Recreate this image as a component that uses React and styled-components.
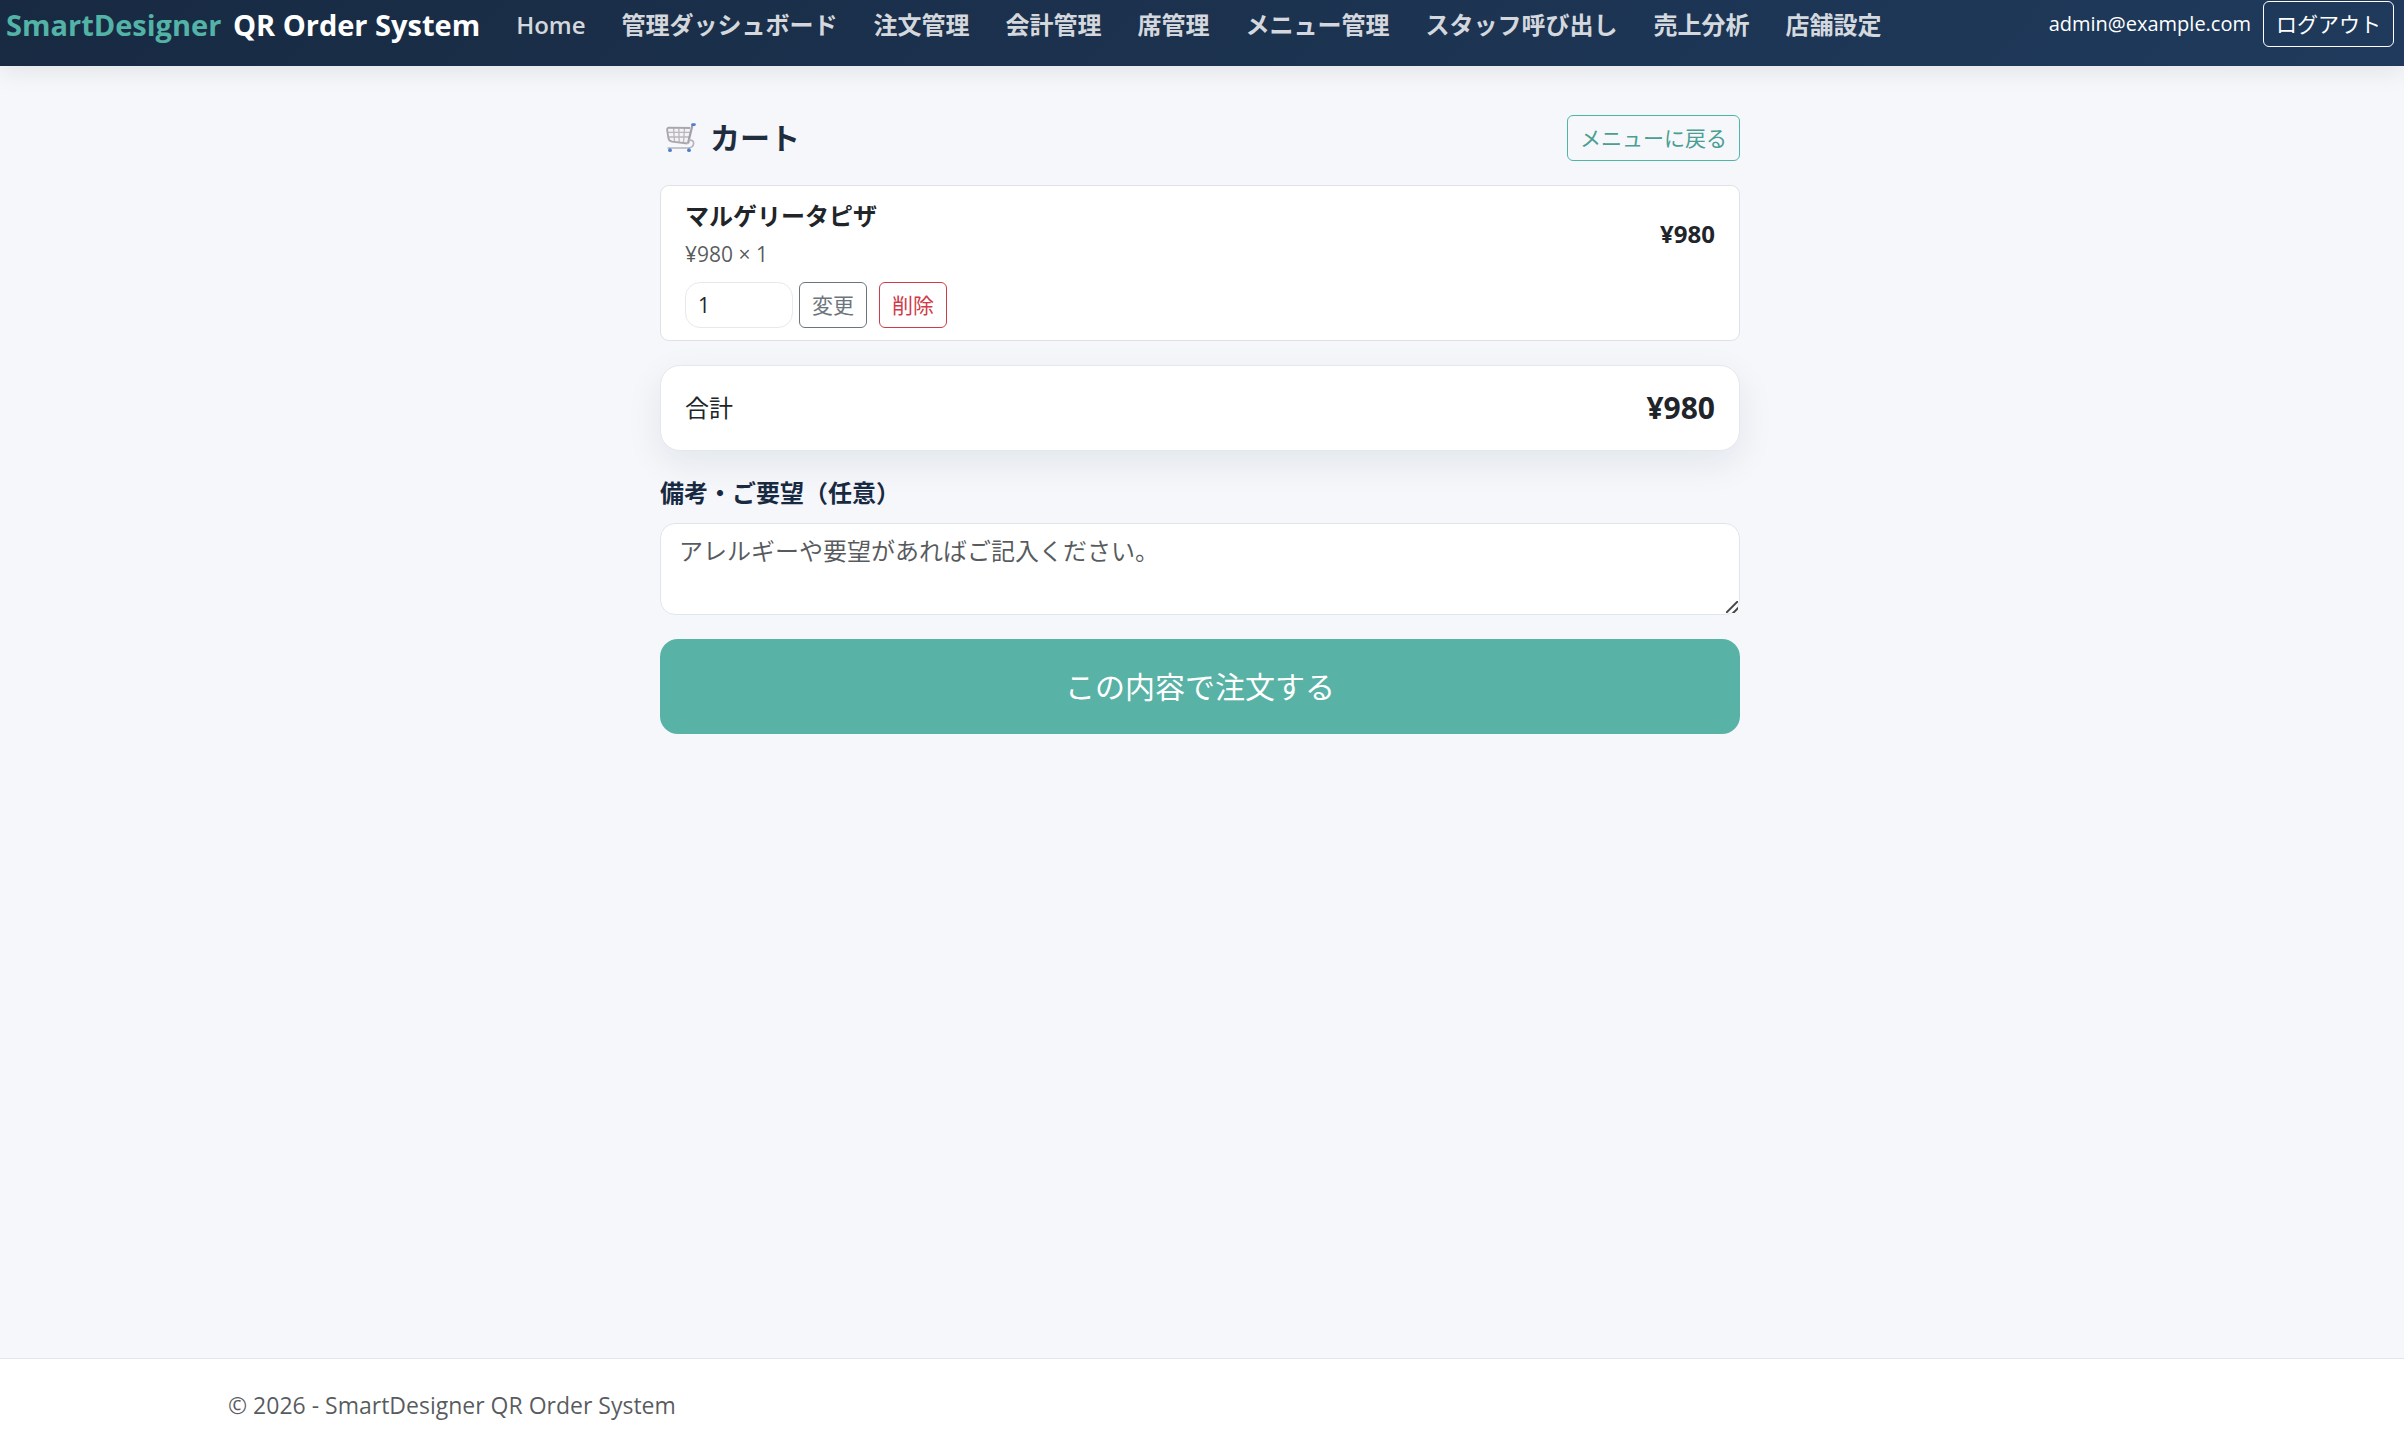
import React, { useState } from 'react'
import styled, { createGlobalStyle } from 'styled-components';

const navItems = [
    'Home',
    '管理ダッシュボード',
    '注文管理',
    '会計管理',
    '席管理',
    'メニュー管理',
    'スタッフ呼び出し',
    '売上分析',
    '店舗設定',
]

const yen = (value) => "¥" + value.toLocaleString()

const App = () => {
    const [item, setItem] = useState({ name: 'マルゲリータピザ', price: 980, quantity: 1 })
    const [draft, setDraft] = useState(1)
    const [note, setNote] = useState('')

    const total = item ? item.price * item.quantity : 0

    const updateHandler = (event) => {
        event.preventDefault()
        setItem({ ...item, quantity: Number(draft) })
    }

    return (
        <Page>
            <GlobalStyle />
            <Navbar>
                <Brand href="#"><BrandAccent>SmartDesigner</BrandAccent> QR Order System</Brand>
                <NavLinks>
                    {navItems.map((label) => (
                        <NavLink key={label} href="#">{label}</NavLink>
                    ))}
                </NavLinks>
                <Account>
                    <span>admin@example.com</span>
                    <OutlineButton type="button" $color="#ffffff">ログアウト</OutlineButton>
                </Account>
            </Navbar>

            <Main>
                <Cart>
                    <TitleRow>
                        <Title>
                            <CartIcon />
                            カート
                        </Title>
                        <OutlineLink href="#" $color="#4db6a6" $text="#4a9e92">メニューに戻る</OutlineLink>
                    </TitleRow>

                    {item && (
                        <ItemCard>
                            <ItemHead>
                                <div>
                                    <ItemName>{item.name}</ItemName>
                                    <ItemDetail>{yen(item.price)} × {item.quantity}</ItemDetail>
                                </div>
                                <ItemPrice>{yen(total)}</ItemPrice>
                            </ItemHead>
                            <ItemForm onSubmit={updateHandler}>
                                <QuantityInput
                                    type="number"
                                    min="1"
                                    aria-label="数量"
                                    value={draft}
                                    onChange={(event) => setDraft(event.target.value)}
                                />
                                <OutlineButton type="submit" $color="#6c757d">変更</OutlineButton>
                                <DeleteButton type="button" $color="#d03b48" onClick={() => setItem(null)}>削除</DeleteButton>
                            </ItemForm>
                        </ItemCard>
                    )}

                    <TotalCard>
                        <span>合計</span>
                        <TotalPrice>{yen(total)}</TotalPrice>
                    </TotalCard>

                    <NoteLabel htmlFor="note">備考・ご要望（任意）</NoteLabel>
                    <NoteInput
                        id="note"
                        rows={2}
                        placeholder="アレルギーや要望があればご記入ください。"
                        value={note}
                        onChange={(event) => setNote(event.target.value)}
                    />
                    <SubmitButton type="button">この内容で注文する</SubmitButton>
                </Cart>
            </Main>

            <Footer>
                <FooterInner>© 2026 - SmartDesigner QR Order System</FooterInner>
            </Footer>
        </Page>
    )
}

export default App

const CartIcon = () => (
    <CartSvg viewBox="0 0 30 30" aria-hidden="true">
        <path d="M2 4.5 L25 3.5 L21.5 20 L6 18.5 Q3 18 2.6 15 L1 7 Q0.7 4.8 2 4.5 Z" fill="#f3f2f5" />
        <path d="M1.5 9.3 H24 M2 14 H23 M7.5 4.5 L8.5 18.5 M12.8 4.5 L13.2 19 M18.5 4.5 L17.5 19.5" stroke="#b9b6bd" strokeWidth="1.3" fill="none" />
        <path d="M24 5 L3 4.6 Q1 4.8 1.1 7 L2.4 15 Q3 18.2 6 18.6 L21.5 20.5" stroke="#a9a6ad" strokeWidth="1.8" fill="none" />
        <path d="M26.5 1.8 L22 20.5" stroke="#a29fa7" strokeWidth="2.2" fill="none" />
        <path d="M22.5 17.2 Q28 16.5 27.6 20.5 Q27.2 24.8 22 25 H1.5" stroke="#b7b2bd" strokeWidth="1.7" fill="none" />
        <path d="M26.5 1.6 H28.5" stroke="#4f7fca" strokeWidth="2.6" strokeLinecap="round" />
        <circle cx="4" cy="27.2" r="1.9" fill="#4f7fca" />
        <circle cx="23" cy="27.2" r="1.9" fill="#4f7fca" />
    </CartSvg>
)

const GlobalStyle = createGlobalStyle`
    * {
        box-sizing: border-box;
    }

    body {
        margin: 0;
        background-color: #f5f7fb;
        color: #212529;
        font-family: "Open Sans", "Noto Sans CJK JP", sans-serif;
        font-size: 24px;
        line-height: 36px;
    }

    button, input, textarea {
        font: inherit;
    }
`;

const Page = styled.div`
    display: flex;
    flex-direction: column;
    min-height: 100vh;
`;

const Navbar = styled.nav`
    display: flex;
    align-items: flex-start;
    padding: 1px 10px 17px 6px;
    background: linear-gradient(135deg, #182a42, #1f3a5c);
    box-shadow: 0 6px 24px rgba(0, 0, 0, 0.08);
`;

const Brand = styled.a`
    margin-right: 36px;
    color: white;
    font-size: 29px;
    font-weight: 700;
    line-height: 48px;
    text-decoration: none;
    white-space: nowrap;
`;

const BrandAccent = styled.span`
    margin-right: 4px;
    color: #53b3a6;
`;

const NavLinks = styled.div`
    display: flex;
    gap: 36px;
    flex: 1;
`;

const NavLink = styled.a`
    color: rgba(255, 255, 255, 0.82);
    font-weight: 600;
    line-height: 48px;
    text-decoration: none;
    white-space: nowrap;

    &:hover {
        color: white;
    }
`;

const Account = styled.div`
    display: flex;
    align-items: center;
    gap: 12px;
    color: white;
    font-size: 20px;
`;

const OutlineButton = styled.button`
    padding: 6px 12px;
    border: 1px solid ${({ $color }) => $color};
    border-radius: 6px;
    background-color: transparent;
    color: ${({ $color, $text }) => $text || $color};
    font-size: 21px;
    line-height: 32px;
    text-decoration: none;
    white-space: nowrap;
    cursor: pointer;
`;

const OutlineLink = styled(OutlineButton).attrs({ as: 'a' })``;

const DeleteButton = styled(OutlineButton)`
    margin-left: 6px;
`;

const Main = styled.main`
    flex: 1;
    padding: 49px 4px 48px 0;
`;

const Cart = styled.div`
    display: flex;
    flex-direction: column;
    max-width: 1080px;
    margin: 0 auto;
`;

const TitleRow = styled.div`
    display: flex;
    justify-content: space-between;
    align-items: center;
    margin-bottom: 24px;
`;

const Title = styled.h1`
    display: flex;
    align-items: center;
    gap: 14px;
    margin: 0;
    color: #1f2d3d;
    font-size: 30px;
    font-weight: 700;
`;

const CartSvg = styled.svg`
    width: 30px;
    height: 30px;
    margin-left: 6px;
`;

const ItemCard = styled.section`
    display: flex;
    flex-direction: column;
    gap: 12px;
    margin-bottom: 24px;
    padding: 12px 24px;
    border: 1px solid #dee2e6;
    border-radius: 9px;
    background-color: white;
`;

const ItemHead = styled.div`
    display: flex;
    justify-content: space-between;
    align-items: center;
`;

const ItemName = styled.div`
    margin-bottom: 4px;
    font-weight: 700;
`;

const ItemDetail = styled.div`
    color: rgba(33, 37, 41, 0.75);
    font-size: 21px;
    line-height: 32px;
`;

const ItemPrice = styled.div`
    font-size: 24px;
    font-weight: 700;
`;

const ItemForm = styled.form`
    display: flex;
    gap: 6px;
`;

const QuantityInput = styled.input`
    width: 108px;
    padding: 6px 12px;
    border: 1px solid #e6e9ee;
    border-radius: 15px;
    background-color: white;
    color: #212529;
    font-size: 21px;
    line-height: 32px;
`;

const TotalCard = styled.section`
    display: flex;
    justify-content: space-between;
    align-items: center;
    margin-bottom: 24px;
    padding: 24px;
    border: 1px solid #e3e8ef;
    border-radius: 20px;
    background-color: white;
    box-shadow: 0 12px 36px rgba(15, 23, 42, 0.08);
`;

const TotalPrice = styled.div`
    font-size: 30px;
    font-weight: 700;
`;

const NoteLabel = styled.label`
    margin-bottom: 12px;
    color: #182a42;
    font-weight: 600;
`;

const NoteInput = styled.textarea`
    margin-bottom: 24px;
    padding: 9px 18px;
    border: 1px solid #e0e5ec;
    border-radius: 15px;
    background-color: white;
    color: #212529;
    resize: vertical;

    &::placeholder {
        color: rgba(33, 37, 41, 0.75);
    }

    &::-webkit-resizer {
        background: linear-gradient(
            135deg,
            transparent 7px,
            #444 8px,
            #444 9px,
            transparent 10px,
            transparent 12px,
            #444 13px,
            #444 14px,
            transparent 15px
        ) 2px 2px / 12px 12px no-repeat;
    }
`;

const SubmitButton = styled.button`
    padding: 24px;
    border: none;
    border-radius: 18px;
    background-color: #58b2a6;
    color: white;
    font-size: 30px;
    line-height: 47px;
    cursor: pointer;
`;

const Footer = styled.footer`
    padding: 28px 4px 19px 0;
    border-top: 1px solid #e0e7ea;
    background-color: white;
`;

const FooterInner = styled.div`
    max-width: 1980px;
    margin: 0 auto;
    padding: 0 18px;
    color: rgba(33, 37, 41, 0.75);
    font-size: 23px;
`;
